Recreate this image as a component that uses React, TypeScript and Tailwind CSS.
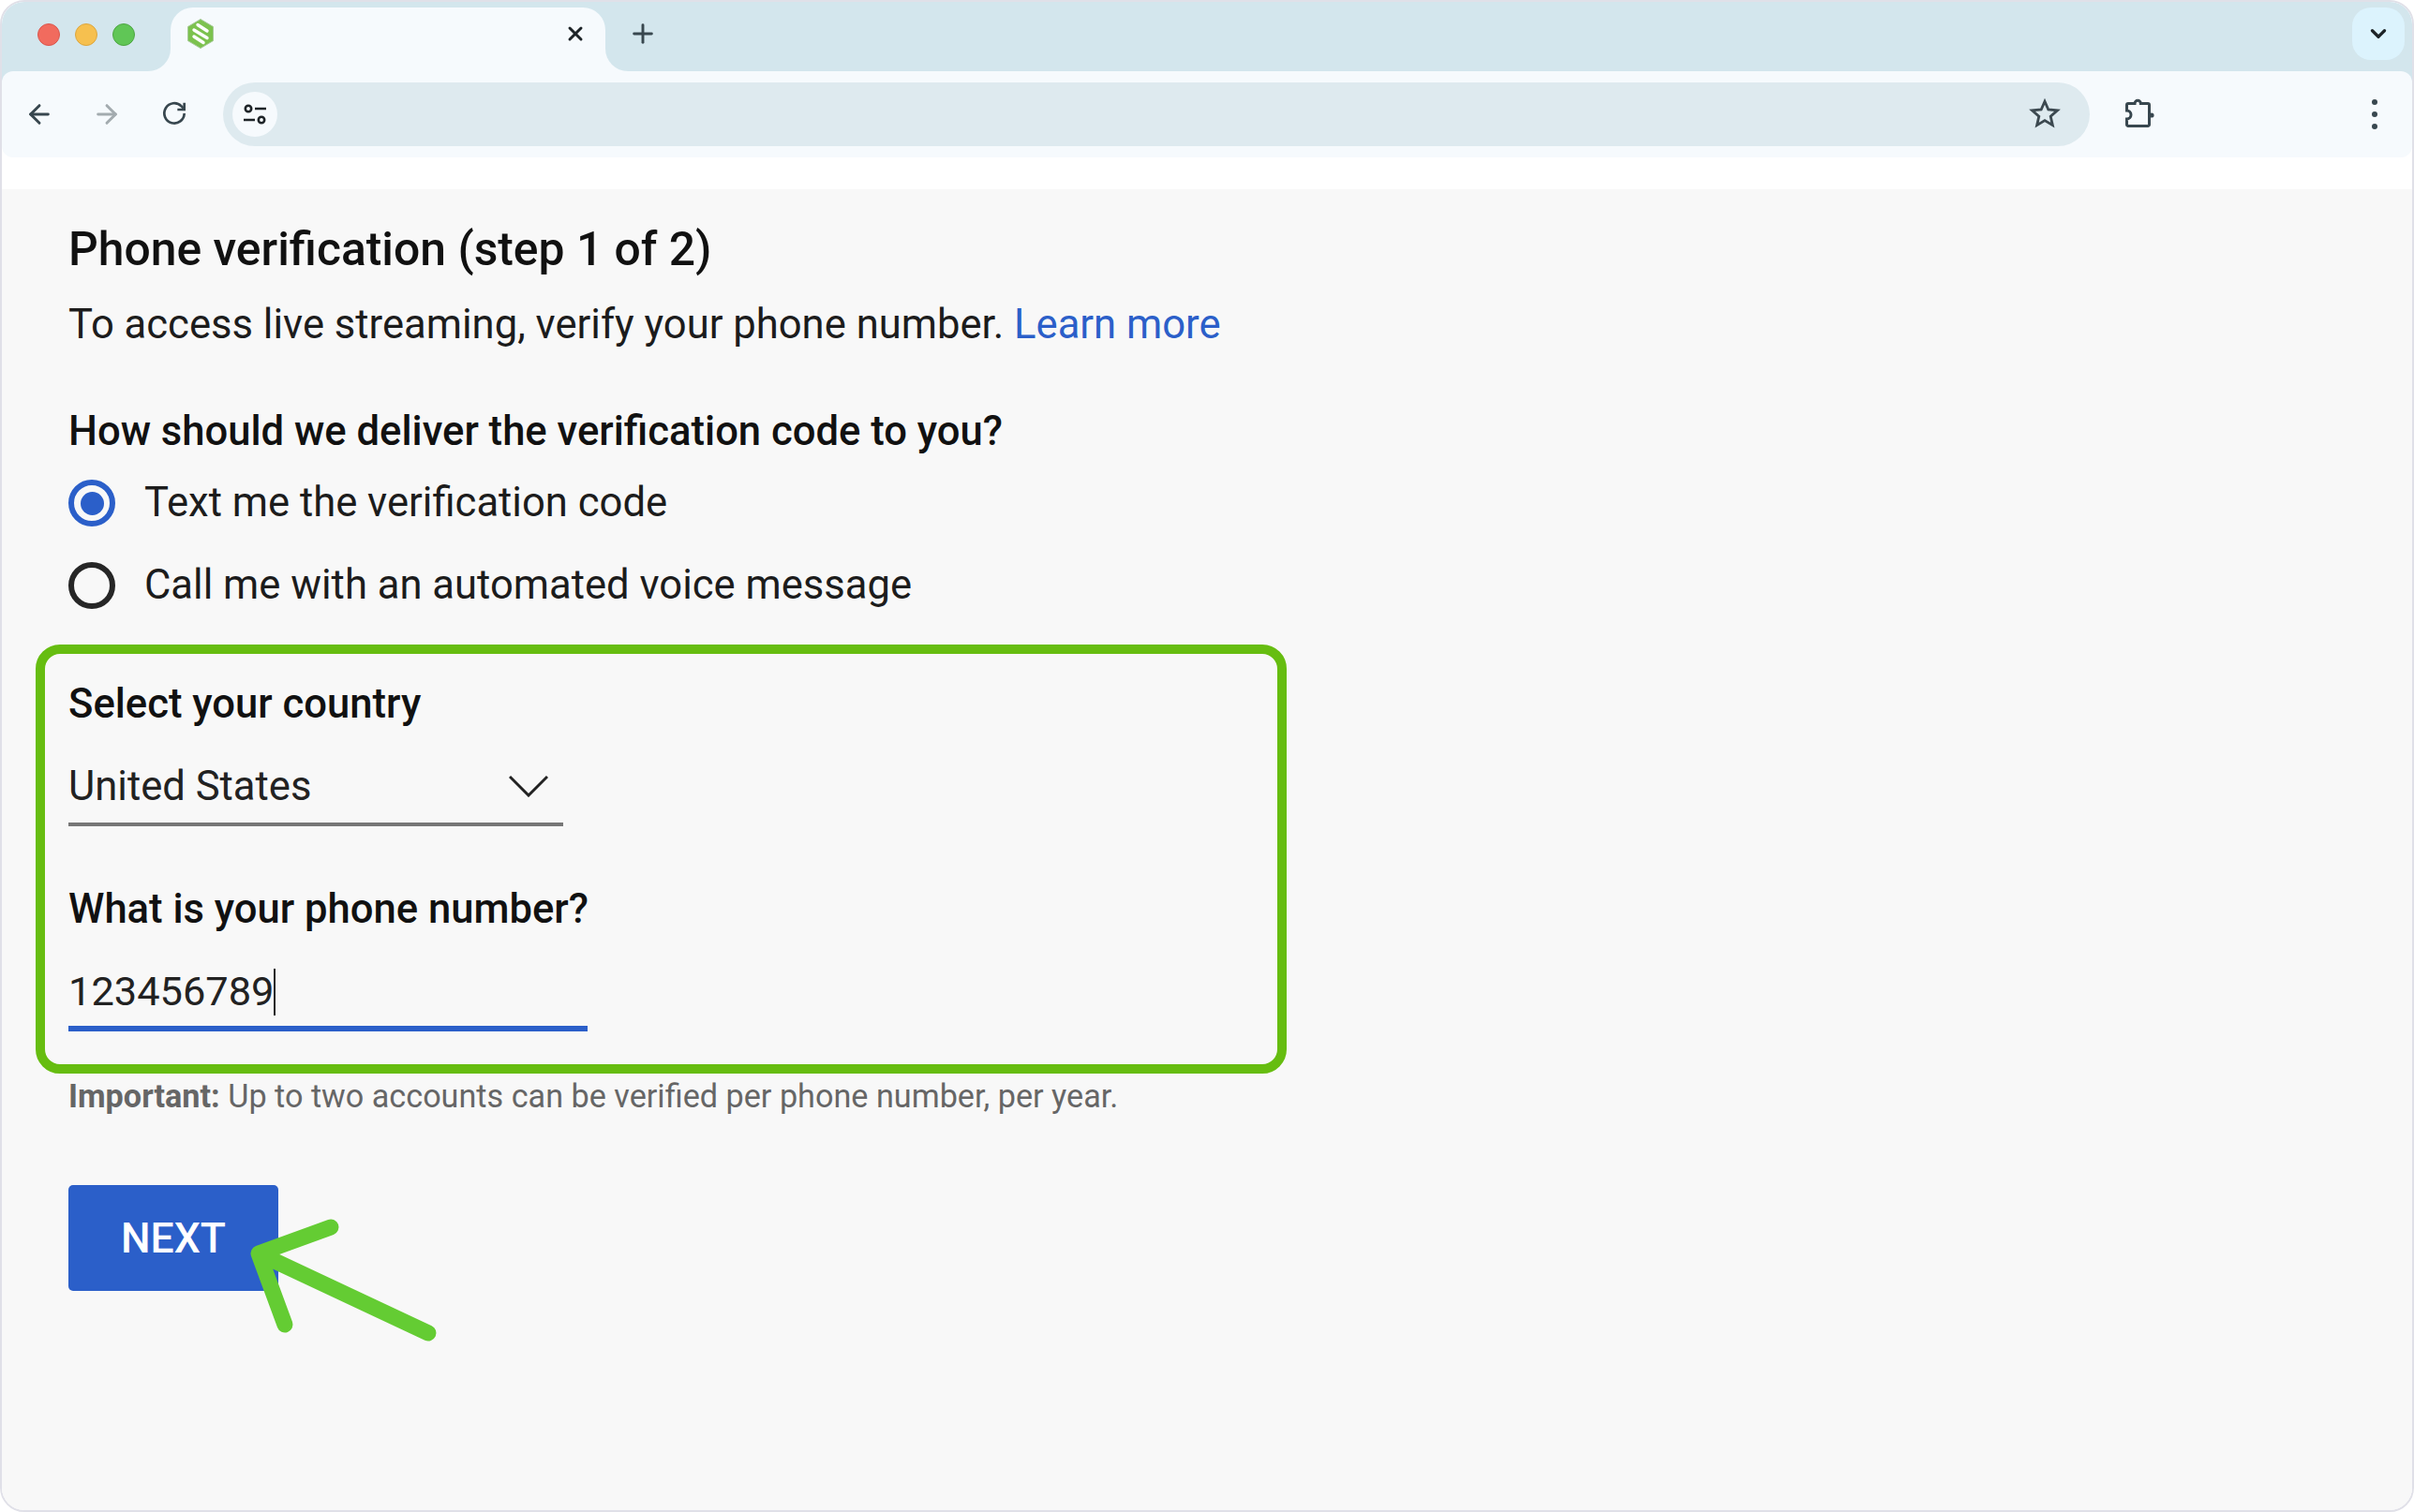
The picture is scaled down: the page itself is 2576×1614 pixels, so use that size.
import { ArrowLeft, ArrowRight, ChevronDown, Plus, X } from "lucide-react";

const font = "font-['Roboto',sans-serif]";

function Favicon() {
  return (
    <svg width="28" height="32" viewBox="0 0 28 32">
      <path d="M14 0.5 27.5 8.5V23.5L14 31.5 0.5 23.5V8.5Z" fill="#7cc24e" stroke="#a6c99a" strokeWidth="1" />
      <path d="M11 6.5 21 13M7 12 21 20.5M7 19 17 25.5" stroke="#fff" strokeWidth="3.4" strokeLinecap="round" />
    </svg>
  );
}

function Radio({ checked, label }: { checked?: boolean; label: string }) {
  return (
    <div className="flex h-[88px] items-center">
      <div
        className={`flex h-[50px] w-[50px] items-center justify-center rounded-full border-[6px] ${
          checked ? "border-[#2b5fc9]" : "border-[#262626]"
        }`}
      >
        {checked && <div className="h-[25px] w-[25px] rounded-full bg-[#2b5fc9]" />}
      </div>
      <span className="ml-[31px] text-[43.6px] leading-[50px] text-[#1c1c1c]">{label}</span>
    </div>
  );
}

export default function App() {
  return (
    <div className={`relative flex h-[1614px] w-[2576px] flex-col overflow-hidden rounded-[26px] border-2 border-[#e0e0e8] bg-white ${font}`}>
      {/* tab strip */}
      <div className="flex h-[74px] shrink-0 bg-[#f6fafd]">
        <div className="flex w-[180px] gap-[16px] rounded-br-[24px] bg-[#d3e6ed] pl-[38px] pt-[23px]">
          <div className="h-[24px] w-[24px] rounded-full border border-[#d9574e] bg-[#f16b5e]" />
          <div className="h-[24px] w-[24px] rounded-full border border-[#dba63f] bg-[#f6c04f]" />
          <div className="h-[24px] w-[24px] rounded-full border border-[#4ea544] bg-[#60c656]" />
        </div>
        <div className="w-[464px] bg-[#d3e6ed] pt-[6px]">
          <div className="flex h-[68px] items-start justify-between rounded-t-[24px] bg-[#f6fafd] pl-[18px] pr-[20px] pt-[12px]">
            <Favicon />
            <X className="mt-[4px] h-[24px] w-[24px] text-[#1d2327]" strokeWidth={3} />
          </div>
        </div>
        <div className="flex flex-1 items-start justify-between rounded-bl-[24px] bg-[#d3e6ed] pl-[24px] pr-[8px] pt-[6px]">
          <Plus className="mt-[12px] h-[32px] w-[32px] text-[#38474f]" strokeWidth={2.2} />
          <div className="flex h-[56px] w-[56px] items-center justify-center rounded-[20px] bg-[#dcf3fd]">
            <ChevronDown className="h-[26px] w-[26px] text-[#1d2327]" strokeWidth={3} />
          </div>
        </div>
      </div>

      {/* toolbar */}
      <div className="shrink-0 bg-[linear-gradient(#d3e6ed_50%,#ffffff_50%)]">
        <div className="flex h-[92px] items-center rounded-[12px] bg-[#f6fafd] pl-[24px]">
          <ArrowLeft className="h-[32px] w-[32px] text-[#38474f]" strokeWidth={2.2} />
          <ArrowRight className="ml-[40px] h-[32px] w-[32px] text-[#a3abaf]" strokeWidth={2.2} />
          <svg className="ml-[40px] mt-[-2px]" width="32" height="32" viewBox="0 0 24 24" fill="none" stroke="#38474f" strokeWidth="2">
            <path d="M20 12a8 8 0 1 1-2.3-5.7L20 8.6" />
            <path d="M20 3.5V9h-5.5" />
          </svg>
          <div className="ml-[36px] flex h-[68px] w-[1992px] items-center justify-between rounded-full bg-[#deeaef] pl-[10px] pr-[31px]">
            <div className="flex h-[48px] w-[48px] items-center justify-center rounded-full bg-[#f6fafd]">
              <svg width="26" height="26" viewBox="0 0 26 26" fill="none" stroke="#1d2327" strokeWidth="2.6">
                <circle cx="6" cy="7" r="3.2" />
                <path d="M13 7H25M1 19H13" />
                <circle cx="20" cy="19" r="3.2" />
              </svg>
            </div>
            <svg className="mt-[-2px]" width="34" height="34" viewBox="0 0 24 24" fill="none" stroke="#3c4950" strokeWidth="2">
              <path d="M12 3l2.7 6.2 6.8.6-5.1 4.5 1.5 6.6L12 17.4 6.1 20.9l1.5-6.6L2.5 9.8l6.8-.6z" />
            </svg>
          </div>
          <svg className="ml-[38px] mt-[-2px]" width="32" height="32" viewBox="0 0 32 32" fill="none" stroke="#38474f" strokeWidth="3">
            <path d="M10 5.5a3.2 3.2 0 0 1 6.4 0H24a1.5 1.5 0 0 1 1.5 1.5V28a1.5 1.5 0 0 1-1.5 1.5H3A1.5 1.5 0 0 1 1.5 28V22a4.5 4.5 0 0 0 0-9V7A1.5 1.5 0 0 1 3 5.5Z" />
            <circle cx="28" cy="18" r="2.6" fill="#38474f" stroke="none" />
          </svg>
          <div className="ml-[231px] flex flex-col gap-[7px]">
            <div className="h-[6px] w-[6px] rounded-full bg-[#38474f]" />
            <div className="h-[6px] w-[6px] rounded-full bg-[#38474f]" />
            <div className="h-[6px] w-[6px] rounded-full bg-[#38474f]" />
          </div>
        </div>
      </div>

      <div className="h-[34px] shrink-0 bg-white" />

      {/* page */}
      <div className="flex flex-1 flex-col items-start bg-[#f8f8f8] pl-[71px] pt-[34px]">
        <h1 className="text-[49.8px] font-medium leading-[60px] text-[#111]">Phone verification (step 1 of 2)</h1>
        <p className="mt-[26px] text-[43.6px] leading-[50px] text-[#1c1c1c]">
          To access live streaming, verify your phone number. <span className="text-[#2b5fc9]">Learn more</span>
        </p>
        <h2 className="mt-[64px] text-[43.6px] font-medium leading-[50px] text-[#111]">How should we deliver the verification code to you?</h2>
        <div className="mt-[7px]">
          <Radio checked label="Text me the verification code" />
          <Radio label="Call me with an automated voice message" />
        </div>

        <div className="ml-[-35px] mt-[19px] w-[1335px] rounded-[26px] border-[10px] border-[#66bd10] pb-[35px] pl-[25px] pt-[29px]">
          <div className="text-[43.6px] font-medium leading-[50px] text-[#111]">Select your country</div>
          <div className="mt-[38px] flex w-[528px] items-start justify-between border-b-4 border-[#777] pb-[13px] pr-[16px]">
            <span className="text-[43.6px] leading-[50px] text-[#222]">United States</span>
            <svg className="mt-[12px]" width="42" height="24" viewBox="0 0 42 24" fill="none" stroke="#222" strokeWidth="3">
              <path d="M1 2 21 22 41 2" />
            </svg>
          </div>
          <div className="mt-[64px] text-[43.6px] font-medium leading-[50px] text-[#111]">What is your phone number?</div>
          <div className="mt-[38px] flex w-[554px] items-center border-b-[6px] border-[#2b5fc9] pb-[11px]">
            <span className="text-[43.4px] leading-[50px] text-[#222]">123456789</span>
            <span className="h-[50px] w-[2px] bg-[#222]" />
          </div>
        </div>

        <p className="mt-[4px] text-[34.2px] leading-[40px] text-[#666]">
          <span className="font-bold">Important:</span> Up to two accounts can be verified per phone number, per year.
        </p>

        <button type="button" className="mt-[75px] flex h-[113px] w-[224px] items-center justify-center rounded-[5px] bg-[#2b5fc9] pt-[2px] text-[44.5px] font-medium text-white">
          NEXT
        </button>
      </div>

      {/* annotation arrow */}
      <svg className="absolute left-[248px] top-[1278px]" width="230" height="160" viewBox="0 0 230 160" fill="none" stroke="#64cc33" strokeWidth="17" strokeLinecap="round" strokeLinejoin="round">
        <path d="M103 30 26 58 54 134M26 58 207 143" />
      </svg>
    </div>
  );
}
